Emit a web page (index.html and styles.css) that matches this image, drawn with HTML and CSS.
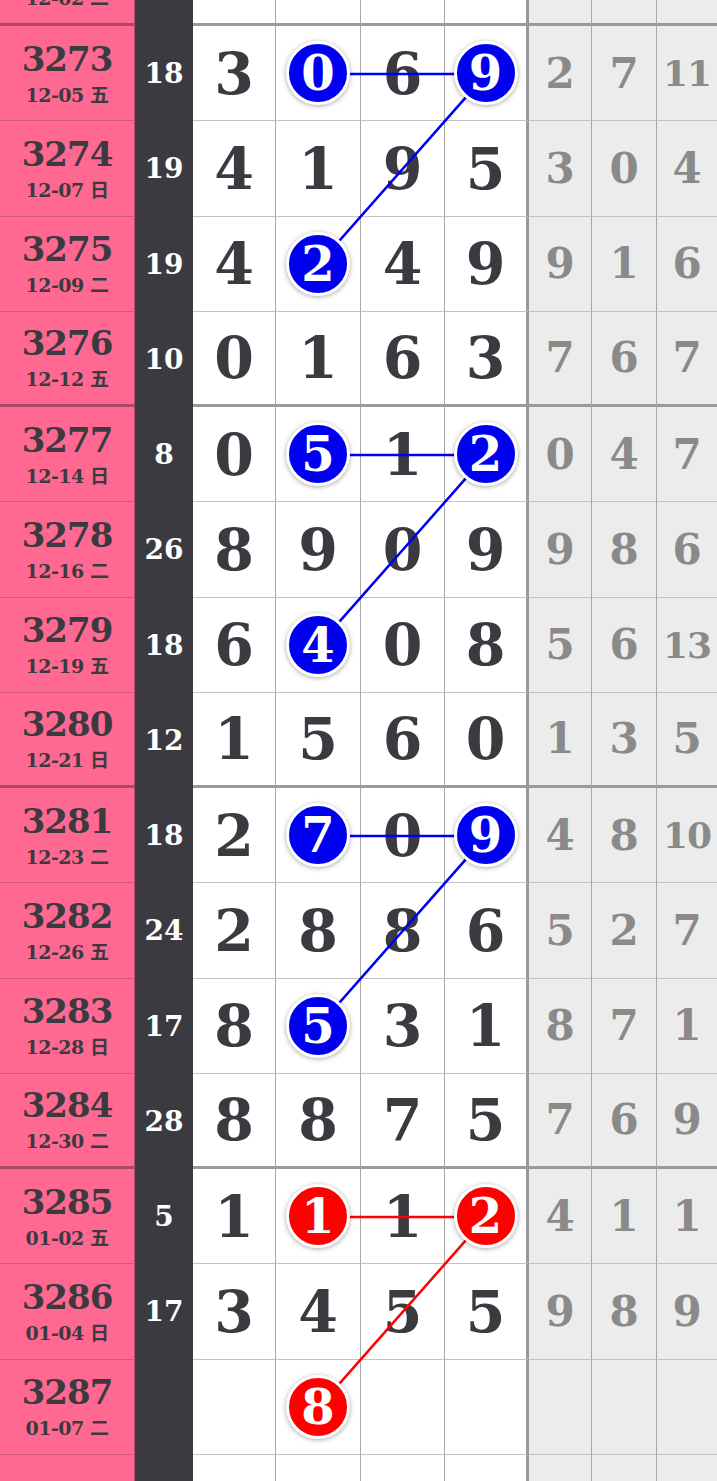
FILE: index.html
```html
<!DOCTYPE html>
<html lang="zh">
	<head>
		<meta charset="utf-8">
		<title>走势图</title>
		<link rel="stylesheet" href="styles.css">
	</head>
	<body>
		<div class="board">
			<div class="row end">
				<div class="issue"><b>3272</b><span>12-02 二</span></div>
				<div class="sum"></div>
				<div class="n"></div><div class="n"></div><div class="n"></div><div class="n last"></div>
				<div class="g"></div><div class="g"></div><div class="g"></div>
			</div>
			<div class="row">
				<div class="issue"><b>3273</b><span>12-05 五</span></div>
				<div class="sum">18</div>
				<div class="n">3</div><div class="n"><i class="ball">0</i></div><div class="n">6</div><div class="n last"><i class="ball">9</i></div>
				<div class="g">2</div><div class="g">7</div><div class="g two">11</div>
			</div>
			<div class="row">
				<div class="issue"><b>3274</b><span>12-07 日</span></div>
				<div class="sum">19</div>
				<div class="n">4</div><div class="n">1</div><div class="n">9</div><div class="n last">5</div>
				<div class="g">3</div><div class="g">0</div><div class="g">4</div>
			</div>
			<div class="row">
				<div class="issue"><b>3275</b><span>12-09 二</span></div>
				<div class="sum">19</div>
				<div class="n">4</div><div class="n"><i class="ball">2</i></div><div class="n">4</div><div class="n last">9</div>
				<div class="g">9</div><div class="g">1</div><div class="g">6</div>
			</div>
			<div class="row end">
				<div class="issue"><b>3276</b><span>12-12 五</span></div>
				<div class="sum">10</div>
				<div class="n">0</div><div class="n">1</div><div class="n">6</div><div class="n last">3</div>
				<div class="g">7</div><div class="g">6</div><div class="g">7</div>
			</div>
			<div class="row">
				<div class="issue"><b>3277</b><span>12-14 日</span></div>
				<div class="sum">8</div>
				<div class="n">0</div><div class="n"><i class="ball">5</i></div><div class="n">1</div><div class="n last"><i class="ball">2</i></div>
				<div class="g">0</div><div class="g">4</div><div class="g">7</div>
			</div>
			<div class="row">
				<div class="issue"><b>3278</b><span>12-16 二</span></div>
				<div class="sum">26</div>
				<div class="n">8</div><div class="n">9</div><div class="n">0</div><div class="n last">9</div>
				<div class="g">9</div><div class="g">8</div><div class="g">6</div>
			</div>
			<div class="row">
				<div class="issue"><b>3279</b><span>12-19 五</span></div>
				<div class="sum">18</div>
				<div class="n">6</div><div class="n"><i class="ball">4</i></div><div class="n">0</div><div class="n last">8</div>
				<div class="g">5</div><div class="g">6</div><div class="g two">13</div>
			</div>
			<div class="row end">
				<div class="issue"><b>3280</b><span>12-21 日</span></div>
				<div class="sum">12</div>
				<div class="n">1</div><div class="n">5</div><div class="n">6</div><div class="n last">0</div>
				<div class="g">1</div><div class="g">3</div><div class="g">5</div>
			</div>
			<div class="row">
				<div class="issue"><b>3281</b><span>12-23 二</span></div>
				<div class="sum">18</div>
				<div class="n">2</div><div class="n"><i class="ball">7</i></div><div class="n">0</div><div class="n last"><i class="ball">9</i></div>
				<div class="g">4</div><div class="g">8</div><div class="g two">10</div>
			</div>
			<div class="row">
				<div class="issue"><b>3282</b><span>12-26 五</span></div>
				<div class="sum">24</div>
				<div class="n">2</div><div class="n">8</div><div class="n">8</div><div class="n last">6</div>
				<div class="g">5</div><div class="g">2</div><div class="g">7</div>
			</div>
			<div class="row">
				<div class="issue"><b>3283</b><span>12-28 日</span></div>
				<div class="sum">17</div>
				<div class="n">8</div><div class="n"><i class="ball">5</i></div><div class="n">3</div><div class="n last">1</div>
				<div class="g">8</div><div class="g">7</div><div class="g">1</div>
			</div>
			<div class="row end">
				<div class="issue"><b>3284</b><span>12-30 二</span></div>
				<div class="sum">28</div>
				<div class="n">8</div><div class="n">8</div><div class="n">7</div><div class="n last">5</div>
				<div class="g">7</div><div class="g">6</div><div class="g">9</div>
			</div>
			<div class="row">
				<div class="issue"><b>3285</b><span>01-02 五</span></div>
				<div class="sum">5</div>
				<div class="n">1</div><div class="n"><i class="ball red">1</i></div><div class="n">1</div><div class="n last"><i class="ball red">2</i></div>
				<div class="g">4</div><div class="g">1</div><div class="g">1</div>
			</div>
			<div class="row">
				<div class="issue"><b>3286</b><span>01-04 日</span></div>
				<div class="sum">17</div>
				<div class="n">3</div><div class="n">4</div><div class="n">5</div><div class="n last">5</div>
				<div class="g">9</div><div class="g">8</div><div class="g">9</div>
			</div>
			<div class="row">
				<div class="issue"><b>3287</b><span>01-07 二</span></div>
				<div class="sum"></div>
				<div class="n"></div><div class="n"><i class="ball red">8</i></div><div class="n"></div><div class="n last"></div>
				<div class="g"></div><div class="g"></div><div class="g"></div>
			</div>
			<div class="row">
				<div class="issue"><b>3288</b></div>
				<div class="sum"></div>
				<div class="n"></div><div class="n"></div><div class="n"></div><div class="n last"></div>
				<div class="g"></div><div class="g"></div><div class="g"></div>
			</div>

			<!-- 连线 -->
			<svg class="links" width="717" height="1620">
				<polyline class="blue" points="318.5,142.9 486.5,142.9 318.5,333.4"/>
				<polyline class="blue" points="318.5,523.9 486.5,523.9 318.5,714.4"/>
				<polyline class="blue" points="318.5,904.9 486.5,904.9 318.5,1095.4"/>
				<polyline class="red" points="318.5,1285.9 486.5,1285.9 318.5,1476.4"/>
			</svg>
		</div>
	</body>
</html>
```

FILE: styles.css
```css
* {
  margin: 0;
  padding: 0;
  box-sizing: border-box;
}

html, body {
  height: 1481px;
  overflow: hidden;
}

body {
  background-color: #fff;
  font-family: "DejaVu Serif", "Noto Sans CJK SC", serif;
  font-weight: bold;
  color: #3a3a40;
}

.board {
  position: relative;
  width: 717px;
  margin-top: -69.25px;
}

.row {
  display: grid;
  grid-template-columns: 135px 58px 83px 85px 84px 84px 63px 65px 60px;
  height: 95.25px;
}

.row > div {
  display: flex;
  align-items: center;
  justify-content: center;
}

.issue {
  flex-direction: column;
  gap: 9px;
  padding-top: 2px;
  background-color: #ff6890;
  border-right: 1px solid #b84a68;
  border-bottom: 1px solid #d0587a;
}

.issue b {
  font-size: 34px;
  line-height: 32px;
  letter-spacing: -1px;
}

.issue span {
  font-size: 19px;
  line-height: 22px;
  letter-spacing: -0.5px;
}

.row:last-child .issue {
  justify-content: flex-start;
  padding-top: 12px;
}

.row.end .issue {
  border-bottom: 3px solid #a8486a;
}

.sum {
  background-color: #3a3a40;
  color: #fff;
  font-size: 28px;
}

.n, .g {
  border-right: 1px solid #a8a8a8;
  border-bottom: 1px solid #c4c4c4;
}

.row.end .n, .row.end .g {
  border-bottom: 3px solid #9a9a9a;
}

.n {
  font-size: 57px;
}

.n.last {
  border-right: 3px solid #999;
}

.g {
  background-color: #ececec;
  color: #8a8a8a;
  font-size: 42px;
}

.g.two {
  font-size: 36px;
  letter-spacing: -1px;
}

.g:last-child {
  border-right: none;
}

.ball {
  position: relative;
  z-index: 2;
  display: flex;
  align-items: center;
  justify-content: center;
  width: 64px;
  height: 64px;
  border: 3px solid #fff;
  border-radius: 50%;
  background-color: #0000f0;
  box-shadow: 0 1px 5px rgba(0, 0, 0, .35);
  color: #fff;
  font-style: normal;
  font-size: 48px;
}

.ball.red {
  background-color: #f00;
}

.links {
  position: absolute;
  top: 0;
  left: 0;
  z-index: 1;
  fill: none;
  stroke-width: 2.5;
}

.links .blue {
  stroke: #0000f0;
}

.links .red {
  stroke: #f00;
}
```
